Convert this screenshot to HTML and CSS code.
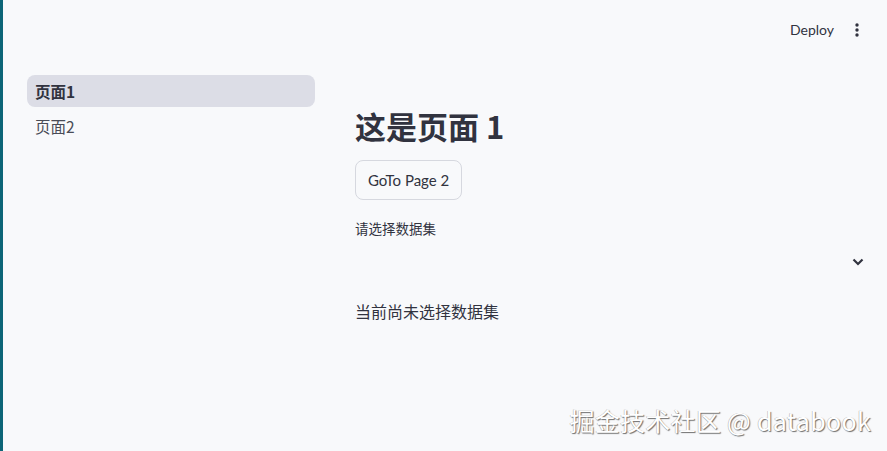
FILE: index.html
```html
<!DOCTYPE html>
<html lang="zh">
<head>
<meta charset="utf-8">
<link rel="stylesheet" href="styles.css">
</head>
<body>
<div class="app">
  <div class="edge"></div>
  <aside class="sidebar">
    <nav class="nav">
      <a class="nav-item active">页面1</a>
      <a class="nav-item">页面2</a>
    </nav>
  </aside>
  <main class="main">
    <header class="header">
      <span class="deploy">Deploy</span>
      <span class="kebab">
        <svg width="4" height="14" viewBox="0 0 4 14"><circle cx="2" cy="2" r="1.7" fill="#31333f"/><circle cx="2" cy="7" r="1.7" fill="#31333f"/><circle cx="2" cy="12" r="1.7" fill="#31333f"/></svg>
      </span>
    </header>
    <section class="content">
      <h1 class="title">这是页面 1</h1>
      <button class="btn">GoTo Page 2</button>
      <label class="label">请选择数据集</label>
      <div class="select">
        <svg width="12" height="8" viewBox="0 0 12 8"><path d="M1.5 1.5 L6 6 L10.5 1.5" fill="none" stroke="#31333f" stroke-width="2.2"/></svg>
      </div>
      <p class="status">当前尚未选择数据集</p>
    </section>
  </main>
</div>
<div class="watermark">掘金技术社区 @ databook</div>
</body>
</html>
```
FILE: styles.css
```css
html, body {
  margin: 0;
  padding: 0;
  height: 100%;
  background: #f8f9fb;
  font-family: "Noto Sans", "Noto Sans CJK SC", sans-serif;
  color: #31333f;
}
.app {
  display: flex;
  height: 451px;
  overflow: hidden;
}
.edge {
  width: 3px;
  flex: none;
  background: #0d6577;
}
.sidebar {
  width: 337px;
  flex: none;
  padding: 75px 25px 0 24px;
  box-sizing: border-box;
}
.nav {
  display: flex;
  flex-direction: column;
  gap: 3px;
}
.nav-item {
  display: flex;
  align-items: center;
  height: 32px;
  padding-left: 8px;
  border-radius: 8px;
  font-family: "Noto Sans CJK SC", sans-serif;
  font-size: 15.5px;
  color: #4a4c57;
}
.nav-item.active {
  background: #dcdde6;
  font-weight: 700;
  color: #31333f;
}
.main {
  flex: 1;
  display: flex;
  flex-direction: column;
  padding: 0 15px;
}
.header {
  height: 58px;
  display: flex;
  align-items: center;
  justify-content: flex-end;
  gap: 21px;
  padding-right: 13px;
}
.deploy {
  font-family: Lato, "Noto Sans", sans-serif;
  font-size: 14px;
  color: #31333f;
}
.kebab {
  display: flex;
  align-items: center;
  padding-top: 1px;
}
.content {
  display: flex;
  flex-direction: column;
  align-items: flex-start;
  padding-top: 49px;
}
.title {
  margin: 0;
  font-family: "Noto Sans CJK SC", sans-serif;
  font-size: 31px;
  font-weight: 700;
  line-height: 38px;
  color: #31333f;
}
.btn {
  margin-top: 15px;
  height: 40px;
  padding: 0 12px;
  border: 1px solid #d6d8df;
  border-radius: 8px;
  background: #f8f9fb;
  font-family: Lato, sans-serif;
  font-size: 15px;
  color: #31333f;
}
.label {
  margin-top: 18px;
  font-family: "Noto Sans CJK SC", sans-serif;
  font-size: 13.5px;
  line-height: 20px;
  color: #31333f;
}
.select {
  align-self: stretch;
  height: 40px;
  margin-top: 4px;
  display: flex;
  align-items: center;
  justify-content: flex-end;
  padding-right: 8px;
}
.status {
  margin: 17px 0 0;
  font-family: "Noto Sans CJK SC", sans-serif;
  font-size: 16px;
  line-height: 24px;
  color: #31333f;
}
.watermark {
  position: absolute;
  right: 16px;
  bottom: 13px;
  font-family: "Noto Sans CJK SC", sans-serif;
  font-size: 25px;
  letter-spacing: 0.3px;
  color: #ffffff;
  text-shadow: 1px 1px 1px #6f6f6f, -0.5px -0.5px 0.5px #b0b0b0;
}
```
